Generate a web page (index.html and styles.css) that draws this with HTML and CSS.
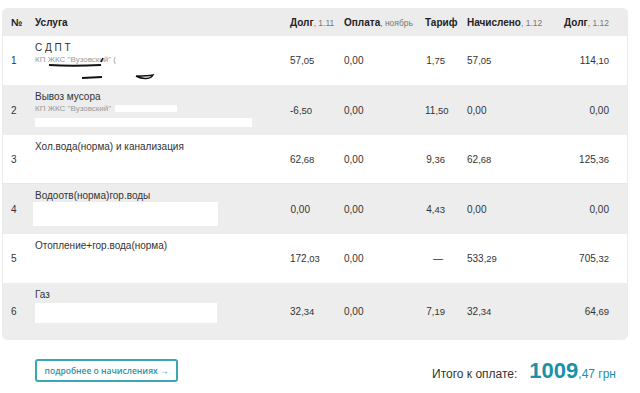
FILE: index.html
```html
<!DOCTYPE html>
<html lang="ru">
<head>
<meta charset="utf-8">
<link rel="stylesheet" href="styles.css">
</head>
<body>
<div class="page">
  <div class="table">
    <div class="row head">
      <div class="c-num"><b>№</b></div>
      <div class="c-name"><b>Услуга</b></div>
      <div class="c-debt h"><b>Долг</b><span class="sfx">, 1.11</span></div>
      <div class="c-pay"><b>Оплата</b><span class="sfx">, ноябрь</span></div>
      <div class="c-tar h"><b>Тариф</b></div>
      <div class="c-chg"><b>Начислено</b><span class="sfx">, 1.12</span></div>
      <div class="c-debt2"><b>Долг</b><span class="sfx">, 1.12</span></div>
    </div>

    <div class="row white r49">
      <div class="c-num">1</div>
      <div class="c-name">
        <div class="nm">С Д П Т</div>
        <div class="sub">КП ЖКС "Вузовский" (</div>
      </div>
      <div class="c-debt">57<span class="k">,05</span></div>
      <div class="c-pay">0,00</div>
      <div class="c-tar">1<span class="k">,75</span></div>
      <div class="c-chg">57<span class="k">,05</span></div>
      <div class="c-debt2">114<span class="k">,10</span></div>
      <svg class="scribble" width="160" height="50" viewBox="0 0 160 50">
        <path d="M46 29 C 60 30, 80 30, 98 29" stroke="#111" stroke-width="2" fill="none"/>
        <path d="M98 26 l2 -4" stroke="#111" stroke-width="1.5" fill="none"/>
        <path d="M79 42 L 99 41" stroke="#111" stroke-width="2" fill="none"/>
        <path d="M133 40 C 140 44, 148 43, 150 39 C 145 40, 138 40, 133 40" stroke="#111" stroke-width="1.5" fill="none"/>
      </svg>
    </div>

    <div class="row gray r50">
      <div class="c-num">2</div>
      <div class="c-name">
        <div class="nm">Вывоз мусора</div>
        <div class="sub">КП ЖКС "Вузовский" <span class="mask mask-in"></span></div>
        <div class="mask mask-a"></div>
      </div>
      <div class="c-debt">-6<span class="k">,50</span></div>
      <div class="c-pay">0,00</div>
      <div class="c-tar">11<span class="k">,50</span></div>
      <div class="c-chg">0,00</div>
      <div class="c-debt2">0,00</div>
    </div>

    <div class="row white r49 sep">
      <div class="c-num">3</div>
      <div class="c-name">
        <div class="nm">Хол.вода(норма) и канализация</div>
      </div>
      <div class="c-debt">62<span class="k">,68</span></div>
      <div class="c-pay">0,00</div>
      <div class="c-tar">9<span class="k">,36</span></div>
      <div class="c-chg">62<span class="k">,68</span></div>
      <div class="c-debt2">125<span class="k">,36</span></div>
    </div>

    <div class="row gray r50">
      <div class="c-num">4</div>
      <div class="c-name">
        <div class="nm">Водоотв(норма)гор.воды</div>
        <div class="mask mask-b"></div>
      </div>
      <div class="c-debt">0,00</div>
      <div class="c-pay">0,00</div>
      <div class="c-tar">4<span class="k">,43</span></div>
      <div class="c-chg">0,00</div>
      <div class="c-debt2">0,00</div>
    </div>

    <div class="row white r49">
      <div class="c-num">5</div>
      <div class="c-name">
        <div class="nm">Отопление+гор.вода(норма)</div>
      </div>
      <div class="c-debt">172<span class="k">,03</span></div>
      <div class="c-pay">0,00</div>
      <div class="c-tar dash">—</div>
      <div class="c-chg">533<span class="k">,29</span></div>
      <div class="c-debt2">705<span class="k">,32</span></div>
    </div>

    <div class="row gray r56">
      <div class="c-num">6</div>
      <div class="c-name">
        <div class="nm">Газ</div>
        <div class="mask mask-c"></div>
      </div>
      <div class="c-debt">32<span class="k">,34</span></div>
      <div class="c-pay">0,00</div>
      <div class="c-tar">7<span class="k">,19</span></div>
      <div class="c-chg">32<span class="k">,34</span></div>
      <div class="c-debt2">64<span class="k">,69</span></div>
    </div>
  </div>

  <div class="footer">
    <a class="more" href="#">подробнее о начислениях →</a>
    <div class="total">
      <span class="total-label">Итого к оплате:</span>
      <span class="total-sum"><span class="big">1009</span><span class="small">,47 грн</span></span>
    </div>
  </div>
</div>
</body>
</html>
```

FILE: styles.css
```css
* { box-sizing: border-box; }

html, body {
  margin: 0;
  padding: 0;
  background: #fff;
}

body {
  font-family: "Liberation Sans", Arial, sans-serif;
  color: #333;
  font-size: 10px;
}

.page {
  padding: 8px 12px 0 2px;
  width: 640px;
}

.table {
  width: 626px;
  border: 1px solid #ececec;
  border-radius: 5px;
  overflow: hidden;
}

.row {
  position: relative;
  display: grid;
  grid-template-columns: 25px 255px 54px 81px 42px 62px 80px;
  padding: 0 18px 0 7px;
  align-items: center;
}

.head {
  height: 27px;
  background: #ececec;
  font-size: 10px;
  color: #222;
}

.head b { font-weight: bold; }

.sfx {
  font-size: 8.5px;
  color: #777;
}

.gray { background: #ededed; }
.white { background: #fff; }
.sep { border-bottom: 1px solid #e8e8e8; }

.r49 { height: 49px; }
.r50 { height: 50px; }
.r56 { height: 56px; }

.c-name {
  align-self: start;
  padding-top: 5px;
}

.head .c-name { align-self: center; padding-top: 0; }

.nm {
  line-height: 13px;
  font-size: 10px;
  color: #333;
}

.sub {
  font-size: 8px;
  line-height: 11px;
  color: #9a9a9a;
  display: flex;
  align-items: center;
  gap: 4px;
}

.mask {
  background: #fff;
}

.mask-in {
  display: inline-block;
  width: 62px;
  height: 7px;
}

.mask-a {
  width: 217px;
  height: 9px;
  margin-top: 4px;
}

.mask-b {
  width: 185px;
  height: 24px;
  margin-left: -2px;
}

.mask-c {
  width: 182px;
  height: 20px;
  margin-top: 2px;
}

.c-debt { text-align: right; padding-right: 34px; }
.head .c-debt { text-align: left; padding-right: 0; white-space: nowrap; }
.c-tar { text-align: right; padding-right: 22px; }
.head .c-tar { text-align: left; padding-right: 0; }
.c-debt2 { text-align: right; }
.c-pay, .c-chg { white-space: nowrap; }
.c-num { padding-left: 1px; }

.k { font-size: 9.5px; }

.dash { padding-right: 24px; }

.scribble {
  position: absolute;
  left: 0;
  top: 0;
  pointer-events: none;
}

.footer {
  display: flex;
  align-items: center;
  justify-content: space-between;
  padding: 16px 12px 0 33px;
}

.more {
  display: inline-block;
  width: 143px;
  height: 23px;
  border: 2px solid #3ba7b5;
  border-radius: 3px;
  color: #2596a8;
  text-decoration: none;
  font-family: "Open Sans", sans-serif;
  font-weight: 600;
  font-size: 8.5px;
  line-height: 19px;
  text-align: center;
}

.total {
  display: flex;
  align-items: baseline;
  gap: 12px;
  margin-top: 2px;
}

.total-label {
  font-size: 12px;
  color: #333;
}

.total-sum { color: #1a91a8; }

.big {
  font-size: 22px;
  font-weight: bold;
}

.small { font-size: 12px; }
```
